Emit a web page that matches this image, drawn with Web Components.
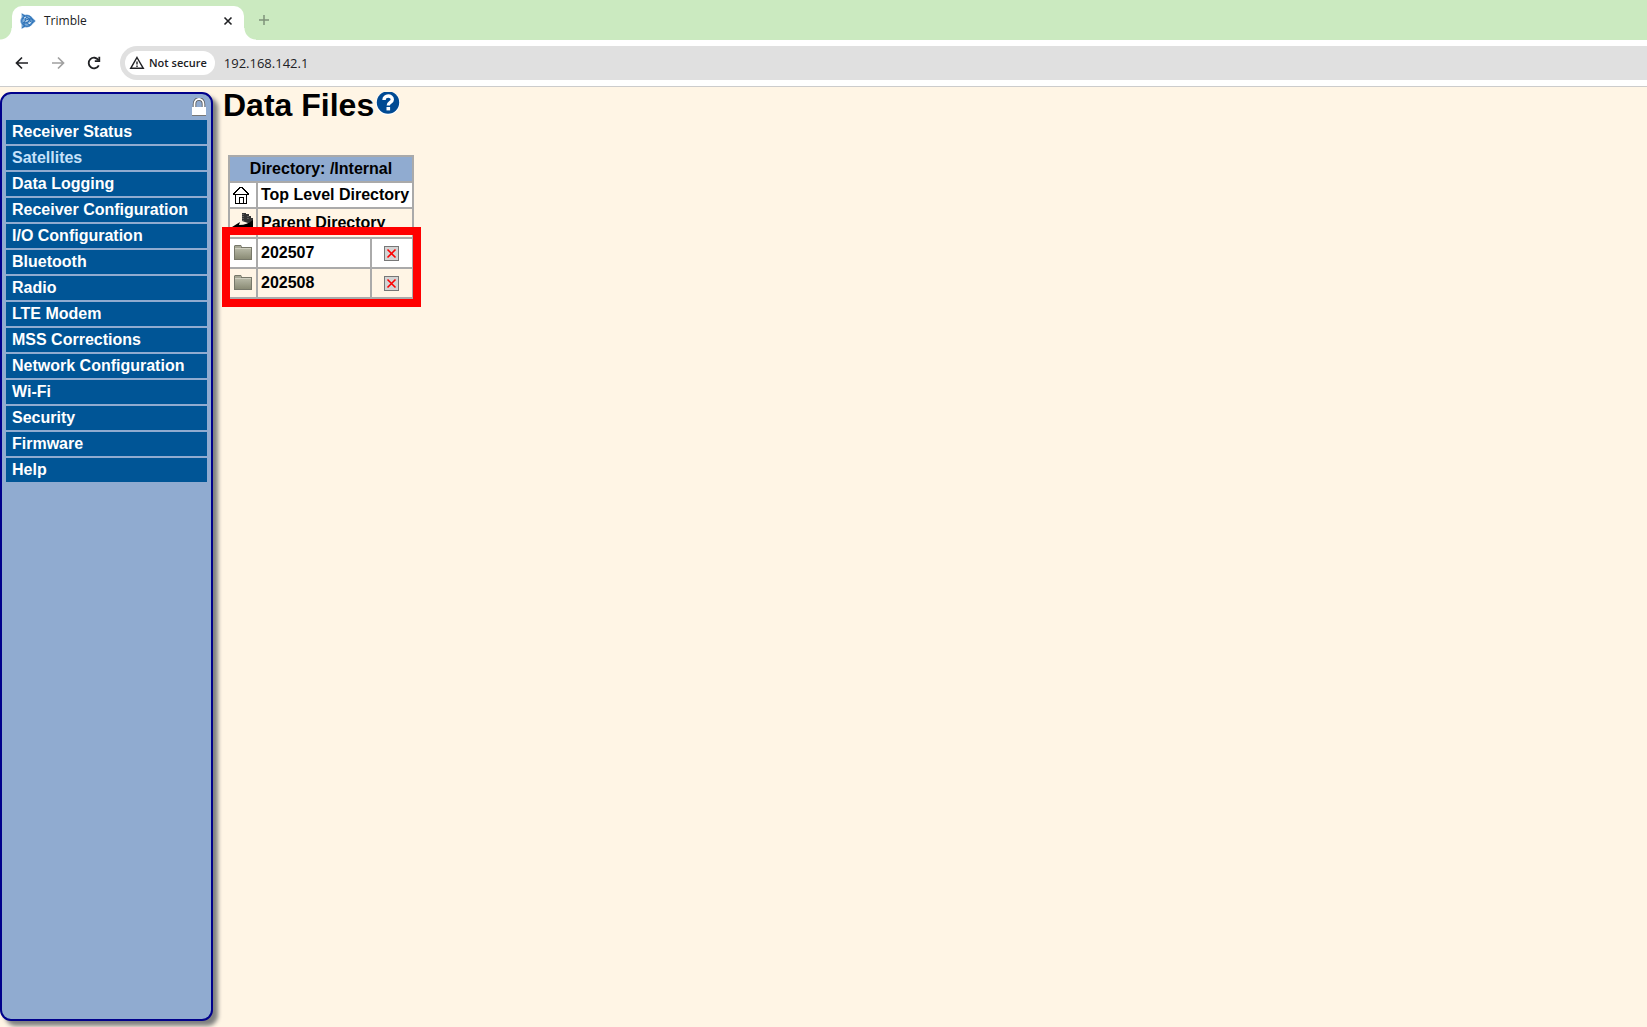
<!DOCTYPE html>
<html lang="en">
<head>
<meta charset="utf-8">
<title>Trimble</title>
<style>
html, body { height: 100%; margin: 0; }
body { background: #fff5e5; font-family: "Liberation Sans", Arial, sans-serif; overflow: hidden; }
</style>
</head>
<body>
<receiver-app></receiver-app>

<template id="t-app">
<style>
:host { display: flex; flex-direction: column; height: 100vh; }
main { flex: 1; display: flex; min-height: 0; padding: 5px 0 6px; box-sizing: border-box; }
</style>
<browser-tabs></browser-tabs>
<browser-toolbar></browser-toolbar>
<main>
  <side-menu></side-menu>
  <data-files></data-files>
</main>
</template>

<template id="t-tabs">
<style>
:host { display: flex; align-items: flex-end; height: 40px; background: #cbeac0; font: 12px/16px "Open Sans", sans-serif; color: #202124; }
.tab { position: relative; display: flex; align-items: center; box-sizing: border-box; width: 232px; height: 34px; margin-left: 12px; padding: 0 8px 5px; border-radius: 10px 10px 0 0; background: #fff; }
.tab::before, .tab::after { content: ""; position: absolute; bottom: 0; width: 12px; height: 12px; }
.tab::before { right: 100%; background: radial-gradient(circle at 0 0, transparent 11px, #fff 12px); }
.tab::after { left: 100%; background: radial-gradient(circle at 100% 0, transparent 11px, #fff 12px); }
.name { flex: 1; margin-left: 8px; padding-top: 1px; }
button { display: flex; padding: 0; border: 0; background: none; }
.add { margin: 0 0 12px 12px; }
svg { display: block; }
</style>
<div class="tab">
  <svg width="16" height="16" viewBox="0 0 16 16" fill="none"><path d="M1.500 0L5 1.800a6 6 0 0 1 6 1.500L15.800 8 11 12.700a6 6 0 0 1-6 1.500L1.500 16V11.500a6 6 0 0 1 0-7z" fill="#7fadd9"/><circle cx="7" cy="8" r="5.300" stroke="#3579bd" stroke-width="1.200"/><path d="M2.500 6c3-3 7-2 8 3M4 12c-.500-4 3-6.500 7.500-6M6 3c-2 4 0 8 4 9M3 9.500c3 1.500 6 0 7-4M12 6l2.500 2L12 10M2 1.500L5 3M2 14.500L5 13" stroke="#246bb3"/><path d="M4 5l2-1M5.500 8.500l2-1M9 11l1.500-2" stroke="#e9f2fa"/></svg>
  <span class="name">Trimble</span>
  <button aria-label="Close tab"><svg width="16" height="16" viewBox="0 0 16 16" stroke="#202124" stroke-width="1.600"><path d="M4.500 4.500l7 7M11.500 4.500l-7 7"/></svg></button>
</div>
<button class="add" aria-label="New tab"><svg width="16" height="16" viewBox="0 0 16 16" stroke="#7f9379" stroke-width="1.500"><path d="M8 3v10M3 8h10"/></svg></button>
</template>

<template id="t-toolbar">
<style>
:host { display: flex; align-items: center; height: 46px; background: #fff; border-bottom: 1px solid #ccc; font: 13px/20px "Open Sans", sans-serif; color: #202124; }
.nav { display: flex; gap: 20px; padding: 0 18px 0 14px; }
button { display: flex; align-items: center; padding: 0; border: 0; background: none; color: inherit; font: inherit; }
svg { display: block; }
.address { flex: 1; display: flex; align-items: center; box-sizing: border-box; height: 34px; padding-left: 5px; border-radius: 17px 0 0 17px; background: #e0e0e0; }
.chip { height: 24px; padding: 0 8px 0 4px; gap: 4px; border-radius: 12px; background: #fff; font: 600 11px/16px "Open Sans", sans-serif; }
input { flex: 1; min-width: 0; margin-left: 9px; padding: 0; border: 0; background: none; font: inherit; color: inherit; outline: 0; }
</style>
<div class="nav">
  <button aria-label="Back"><svg width="16" height="16" viewBox="0 0 16 16" fill="none" stroke="#202124" stroke-width="1.700"><path d="M14 8H3M8 2.500L2.500 8 8 13.500"/></svg></button>
  <button aria-label="Forward"><svg width="16" height="16" viewBox="0 0 16 16" fill="none" stroke="#a0a0a0" stroke-width="1.700"><path d="M2 8h11M8 2.500L13.500 8 8 13.500"/></svg></button>
  <button aria-label="Reload"><svg width="16" height="16" viewBox="0 0 16 16" fill="none" stroke="#202124" stroke-width="1.800"><path d="M12.800 10.300A5.300 5.300 0 1 1 12.500 5.200"/><path d="M13.300 1.800V6.200H8.800"/></svg></button>
</div>
<div class="address">
  <button class="chip"><svg width="16" height="16" viewBox="0 0 16 16" fill="none" stroke="#202124" stroke-width="1.400"><path d="M8 2.500L14.300 13.300H1.700z"/><path d="M8 6.500v3M8 10.500v1.500"/></svg><span>Not secure</span></button>
  <input aria-label="Address" value="192.168.142.1">
</div>
</template>

<template id="t-menu">
<style>
:host { display: flex; flex-direction: column; box-sizing: border-box; width: 213px; flex: none; padding: 4px; border: 2px solid #00008b; border-radius: 11px; background: #90abd0; box-shadow: 5px 5px 4px #808080; }
.top { display: flex; justify-content: flex-end; height: 22px; }
nav { display: flex; flex-direction: column; gap: 2px; }
</style>
<div class="top"><svg width="16" height="20" viewBox="0 0 16 20"><path d="M3.500 9V6a4.500 5 0 0 1 9 0v3" fill="none" stroke="#555" stroke-width="3.400"/><path d="M3.500 9V6a4.500 5 0 0 1 9 0v3" fill="none" stroke="#fff" stroke-width="1.800"/><path d="M1 9h14v8H1z" fill="#fff"/><path d="M1 17.500h14" stroke="#777"/></svg></div>
<nav></nav>
</template>

<template id="t-item">
<style>
:host { display: block; }
a { display: block; height: 24px; padding: 0 6px; background: #005596; color: #fff; font: bold 16px/23px "Liberation Sans", Arial, sans-serif; text-decoration: none; white-space: nowrap; }
:host([active]) a { color: #c6e2fa; }
</style>
<a href="#"><slot></slot></a>
</template>

<template id="t-files">
<style>
:host { display: block; flex: 1; margin-left: 10px; }
header { display: flex; align-items: flex-start; height: 63px; }
h1 { margin: 0; font: bold 32px/26px "Liberation Sans", Arial, sans-serif; color: #000; }
header a { margin-left: 1px; }
header svg { display: block; }
directory-table { margin-left: 5px; }
</style>
<header><h1>Data Files</h1><a href="#" aria-label="Help"><svg width="26" height="24" viewBox="0 0 26 24"><circle cx="13" cy="11" r="12" fill="#fff"/><circle cx="13" cy="10.500" r="11.200" fill="#004a93"/><path d="M9 8C9 2.800 17.300 2.800 17.300 7.400c0 3.200-4 2.800-4 6" fill="none" stroke="#fff" stroke-width="3.400"/><path d="M11.500 15h3.600v3.400h-3.600z" fill="#fff"/></svg></a></header>
<directory-table></directory-table>
</template>

<template id="t-table">
<style>
:host { display: block; position: relative; width: 186px; }
table { width: 100%; table-layout: fixed; border-collapse: collapse; background: #fff5e5; font: bold 16px/20px "Liberation Sans", Arial, sans-serif; color: #000; }
th, td { box-sizing: border-box; height: 26px; padding: 0; border: 2px solid #aaa; text-align: left; white-space: nowrap; }
th { background: #90abd0; text-align: center; }
.odd { background: #fff; }
.tall td { height: 30px; }
.label { padding-left: 3px; }
a { display: block; color: inherit; text-decoration: none; }
svg { display: block; }
.icon svg { margin-left: 2px; }
.folder svg { margin-left: 4px; }
button { display: block; margin: 0 0 0 12px; padding: 0; border: 0; background: none; }
.mark { position: absolute; left: -6px; right: -7px; top: 72px; height: 64px; border: 8px solid #f00; }
</style>
<table>
  <colgroup><col style="width:28px"><col style="width:114px"><col></colgroup>
  <tr><th colspan="3">Directory: /Internal</th></tr>
  <tr class="odd"><td class="icon"><svg width="18" height="18" viewBox="0 0 18 18" fill="none" stroke="#000" shape-rendering="crispEdges"><path d="M1 8.500L8 1.500h2l7 7M1 8.500h16M3.500 8v9.500h11V8M7.500 17v-6h4v6"/></svg></td><td class="label" colspan="2"><a href="#">Top Level Directory</a></td></tr>
  <tr class="tall"><td class="icon"><svg width="22" height="20" viewBox="0 0 22 20"><path d="M10 0h4v1h3v2h2v2h2v4l-5 1-6-2z" fill="#333"/><path d="M11 1v7M16 3v3" stroke="#888" stroke-dasharray="1 1"/><path d="M0 14l8-5-1 3c6 0 10-2 14-5v9H8l-1 3z" fill="#000"/></svg></td><td class="label" colspan="2"><a href="#">Parent Directory</a></td></tr>
</table>
<div class="mark"></div>
</template>

<script>
class BaseElement extends HTMLElement {
  constructor() {
    super();
    this.attachShadow({ mode: "open" }).append(
      document.getElementById(this.constructor.template).content.cloneNode(true));
  }
}
const define = (name, template) =>
  customElements.define(name, class extends BaseElement { static template = template; });

define("browser-tabs", "t-tabs");
define("browser-toolbar", "t-toolbar");
define("menu-item", "t-item");

customElements.define("side-menu", class extends BaseElement {
  static template = "t-menu";
  connectedCallback() {
    const nav = this.shadowRoot.querySelector("nav");
    ["Receiver Status", "Satellites", "Data Logging", "Receiver Configuration", "I/O Configuration",
     "Bluetooth", "Radio", "LTE Modem", "MSS Corrections", "Network Configuration", "Wi-Fi",
     "Security", "Firmware", "Help"].forEach(label => {
      const item = document.createElement("menu-item");
      item.textContent = label;
      item.toggleAttribute("active", label === "Satellites");
      nav.append(item);
    });
  }
});

customElements.define("directory-table", class extends BaseElement {
  static template = "t-table";
  connectedCallback() {
    const body = this.shadowRoot.querySelector("tbody");
    ["202507", "202508"].forEach((name, i) => {
      body.insertAdjacentHTML("beforeend", `<tr class="tall${i % 2 ? "" : " odd"}">
        <td class="folder"><svg width="18" height="18" viewBox="0 0 18 18"><defs><linearGradient id="g" x2="0" y2="1"><stop stop-color="#b9baa8"/><stop offset="1" stop-color="#8a8b75"/></linearGradient></defs><path d="M0 2l1-1h6l1 2h10v13H0z" fill="#77786a"/><path d="M1 2h6v2H1z" fill="#a5a694"/><path d="M1 4h16v11H1z" fill="url(#g)"/><path d="M1 4.500h16" stroke="#cfcfc0"/></svg></td>
        <td class="label"><a href="#">${name}</a></td>
        <td><button aria-label="Delete ${name}"><svg width="15" height="15" viewBox="0 0 15 15"><path d="M0 0h15v15H0z" fill="#777"/><path d="M1 1h13v13H1z" fill="#d4d4d4"/><path d="M3.500 3.500l8 8M11.500 3.500l-8 8" stroke="#f00" stroke-width="1.600"/></svg></button></td></tr>`);
    });
  }
});

define("data-files", "t-files");
define("receiver-app", "t-app");
</script>
</body>
</html>
